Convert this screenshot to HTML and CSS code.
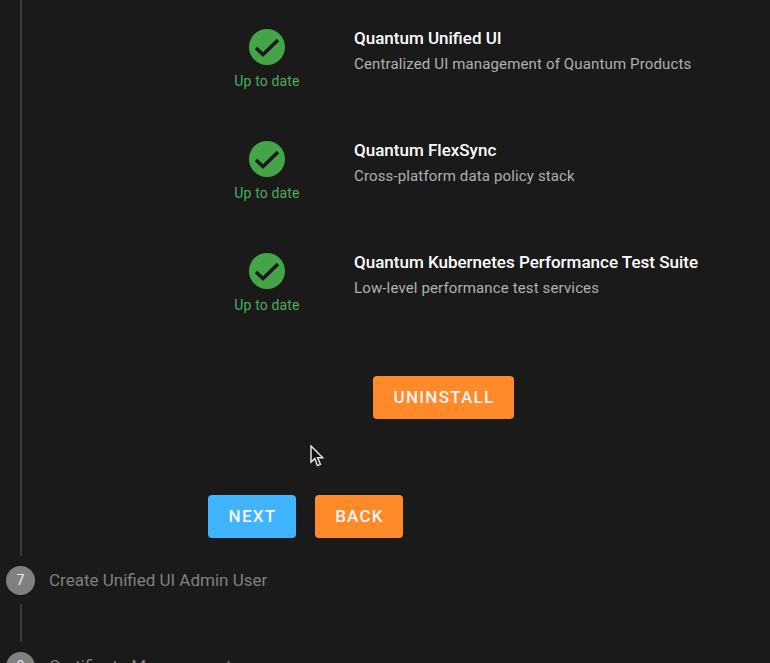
FILE: index.html
```html
<!DOCTYPE html>
<html lang="en">
<head>
<meta charset="UTF-8" />
<title>Quantum Installer</title>
<link rel="stylesheet" href="styles.css">
</head>
<body>

<div class="stepper">
  <div class="step-body">
    <div class="products">
      <div class="product">
        <div class="status">
          <svg class="check" viewBox="0 0 36 36"><circle cx="18" cy="18" r="18" fill="#43a547"/><path d="M7 19 L14 25.5 L29 11" fill="none" stroke="#1a1a1a" stroke-width="3.6"/></svg>
          <span class="status-text">Up to date</span>
        </div>
        <div class="info">
          <div class="name">Quantum Unified UI</div>
          <div class="desc">Centralized UI management of Quantum Products</div>
        </div>
      </div>
      <div class="product">
        <div class="status">
          <svg class="check" viewBox="0 0 36 36"><circle cx="18" cy="18" r="18" fill="#43a547"/><path d="M7 19 L14 25.5 L29 11" fill="none" stroke="#1a1a1a" stroke-width="3.6"/></svg>
          <span class="status-text">Up to date</span>
        </div>
        <div class="info">
          <div class="name">Quantum FlexSync</div>
          <div class="desc">Cross-platform data policy stack</div>
        </div>
      </div>
      <div class="product">
        <div class="status">
          <svg class="check" viewBox="0 0 36 36"><circle cx="18" cy="18" r="18" fill="#43a547"/><path d="M7 19 L14 25.5 L29 11" fill="none" stroke="#1a1a1a" stroke-width="3.6"/></svg>
          <span class="status-text">Up to date</span>
        </div>
        <div class="info">
          <div class="name">Quantum Kubernetes Performance Test Suite</div>
          <div class="desc">Low-level performance test services</div>
        </div>
      </div>
    </div>

    <div class="uninstall-row">
      <button class="btn btn-orange btn-uninstall">UNINSTALL</button>
    </div>

    <div class="nav-row">
      <button class="btn btn-blue btn-next">NEXT</button>
      <button class="btn btn-orange btn-back">BACK</button>
    </div>
  </div>

  <div class="step-head">
    <span class="step-num">7</span>
    <span class="step-title">Create Unified UI Admin User</span>
  </div>
  <div class="step-line"></div>
  <div class="step-head">
    <span class="step-num">8</span>
    <span class="step-title">Certificate Management</span>
  </div>
</div>

<svg class="cursor" viewBox="0 0 14 23" width="14" height="23"><path d="M1 1 L1 17 L4.8 13.6 L7.4 20.6 L10.4 19.4 L7.6 12.8 L12.8 12.8 Z" fill="#111" stroke="#e0e0e0" stroke-width="1.5"/></svg>

</body>
</html>
```

FILE: styles.css
```css
html, body {
  height: 663px;
  overflow: hidden;
}
body {
  margin: 0;
  background: #1a1a1a;
  font-family: Roboto, Arial, sans-serif;
  color: #fff;
  position: relative;
}

.stepper {
  padding-left: 6px;
}
.step-body {
  height: 556px;
  margin-left: 14px;
  border-left: 2px solid #3a3a3a;
  box-sizing: border-box;
  padding-left: 186px;
}
.products {
  padding-top: 29px;
}
.product {
  display: flex;
  height: 112px;
}
.status {
  width: 92px;
  margin-left: 13px;
  display: flex;
  flex-direction: column;
  align-items: center;
}
.check {
  width: 36px;
  height: 36px;
}
.status-text {
  margin-top: 7px;
  font-size: 14px;
  line-height: 18px;
  letter-spacing: 0.15px;
  color: #4caf50;
}
.info {
  margin-left: 41px;
}
.name {
  font-size: 17px;
  font-weight: 500;
  line-height: 19px;
  margin-bottom: 6px;
  white-space: nowrap;
}
.desc {
  font-size: 15px;
  line-height: 20px;
  letter-spacing: 0.14px;
  color: #b0b0b0;
  white-space: nowrap;
}

.btn {
  height: 43px;
  border: none;
  border-radius: 4px;
  color: #f6f6f6;
  font-family: Roboto, Arial, sans-serif;
  font-size: 17px;
  font-weight: 500;
  letter-spacing: 1.25px;
  padding: 0 0 1px 1px;
}
.btn-orange {
  background: #ff8a2a;
}
.btn-blue {
  background: #40b4ff;
}
.uninstall-row {
  margin-top: 11px;
  padding-left: 165px;
}
.btn-uninstall {
  width: 141px;
}
.nav-row {
  margin-top: 76px;
  display: flex;
  gap: 19px;
}
.btn-next {
  width: 88px;
}
.btn-back {
  width: 88px;
}

.step-head {
  display: flex;
  align-items: center;
  height: 48px;
}
.step-num {
  width: 29px;
  height: 29px;
  border-radius: 50%;
  background: #808080;
  color: #f0f0f0;
  font-size: 14px;
  line-height: 29px;
  text-align: center;
}
.step-title {
  margin-left: 14px;
  font-size: 17px;
  color: #808080;
}
.step-line {
  width: 2px;
  height: 38px;
  margin-left: 14px;
  background: #3a3a3a;
}

/* mouse pointer caught in the capture */
.cursor {
  position: absolute;
  left: 310px;
  top: 445px;
}
```
